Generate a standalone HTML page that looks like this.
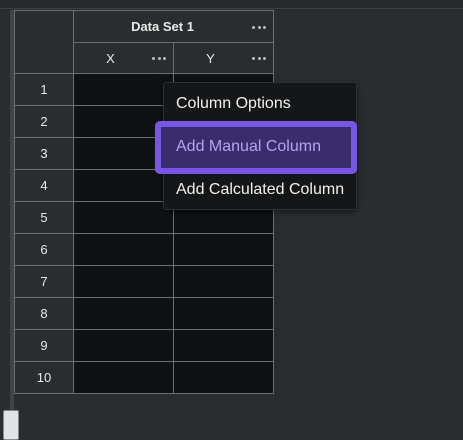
<!DOCTYPE html>
<html><head><style>
*{margin:0;padding:0;box-sizing:border-box}
body{width:463px;height:431px;background:#2a2d2f;position:relative;overflow:hidden;font-family:"Liberation Sans",Arial,sans-serif;color:#e8e8e8}
.top{position:absolute;left:0;top:0;width:463px;height:9px;background:#272a2c;border-bottom:1px solid #3c3f41}
.track{position:absolute;left:10px;top:10px;width:4px;height:421px;background:#414446}
.thumb{position:absolute;left:3px;top:410px;width:16px;height:30px;background:#e0e3e5;border:1px solid #888;border-radius:2px}
.c{position:absolute;border:1px solid #6b6e70;display:flex;align-items:center;justify-content:center;font-size:13px}
.d{background:#0f1113}
.dots{position:absolute;right:7px;top:50%;margin-top:-1px;width:14px;height:3px;display:flex;justify-content:space-between}
.dots i{width:3px;height:3px;border-radius:50%;background:#bbb;display:block}
.menu{position:absolute;left:163px;top:82px;width:194px;height:128px;background:#141618;border:1px solid #2e3133;border-radius:3px;box-shadow:0 2px 6px rgba(0,0,0,.5)}
.item{position:absolute;left:176px;font-size:16px;color:#f0f0f0}
.hl{position:absolute;left:155px;top:121px;width:202px;height:53px;background:#3a2d6e;border:6px solid #7957e6;border-radius:5px}
</style></head><body>
<div class="top"></div>
<div class="track"></div>
<div class="c" style="left:14px;top:10px;width:60px;height:64px"></div>
<div class="c" style="left:73px;top:10px;width:201px;height:33px;font-weight:bold;padding-right:22px">Data Set 1<span class="dots"><i></i><i></i><i></i></span></div>
<div class="c" style="left:73px;top:42px;width:101px;height:32px;padding-right:26px">X<span class="dots"><i></i><i></i><i></i></span></div>
<div class="c" style="left:173px;top:42px;width:101px;height:32px;padding-right:26px">Y<span class="dots"><i></i><i></i><i></i></span></div>
<div id="rows"></div>
<script>
var h='';for(var i=0;i<10;i++){var t=73+i*32;
h+='<div class="c" style="left:14px;top:'+t+'px;width:60px;height:33px">'+(i+1)+'</div>';
h+='<div class="c d" style="left:73px;top:'+t+'px;width:101px;height:33px"></div>';
h+='<div class="c d" style="left:173px;top:'+t+'px;width:101px;height:33px"></div>';}
document.getElementById('rows').innerHTML=h;
</script>
<div class="menu"></div>
<div class="hl"></div>
<div class="item" style="top:95px">Column Options</div>
<div class="item" style="top:138px;color:#b3a3ee">Add Manual Column</div>
<div class="item" style="top:181px">Add Calculated Column</div>
<div class="thumb"></div>
</body></html>
